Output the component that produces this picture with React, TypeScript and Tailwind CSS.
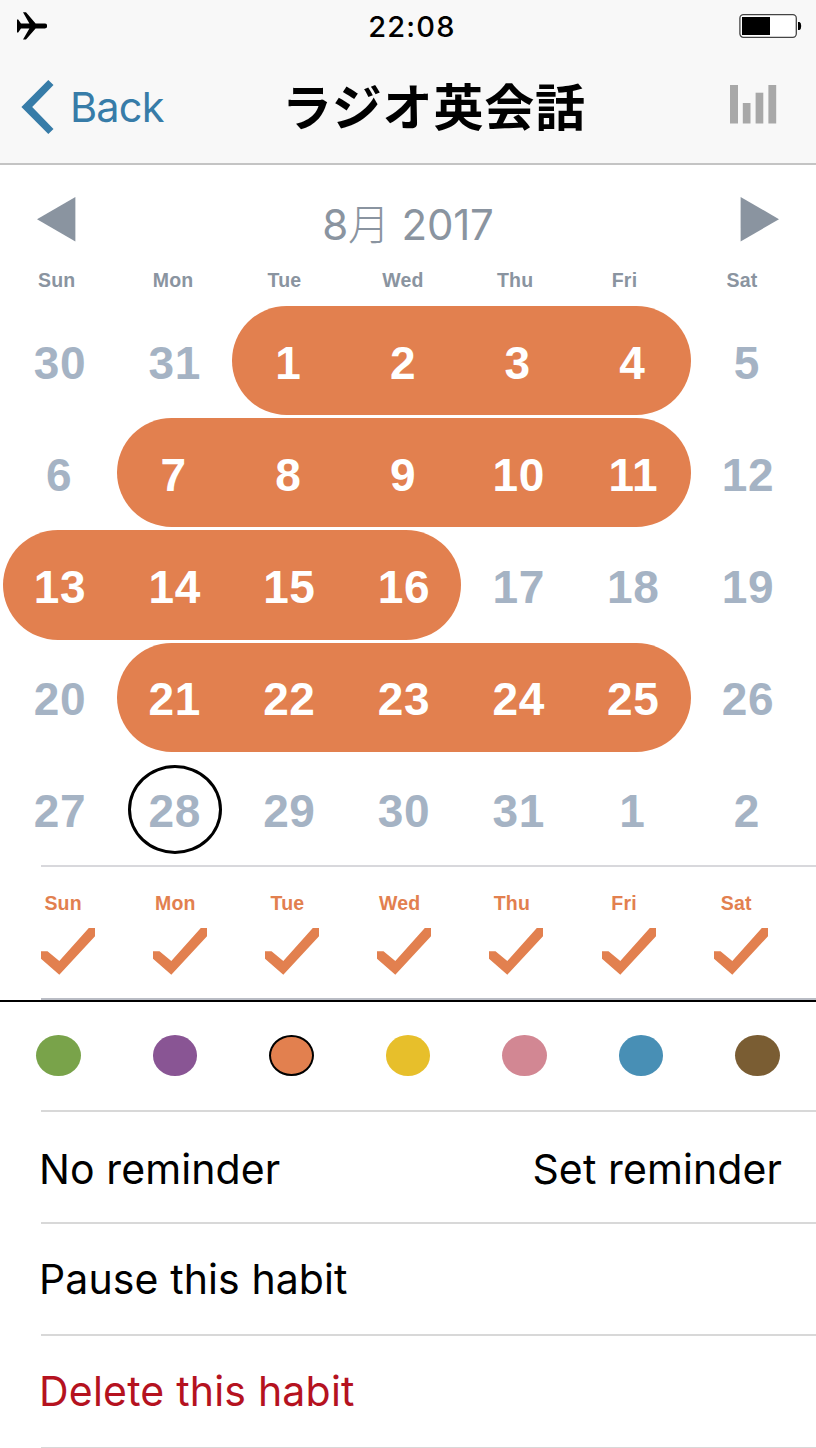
import React, { useState } from 'react'

type Run = {
    done: boolean;
    days: number[];
}

const weekdays = ['Sun', 'Mon', 'Tue', 'Wed', 'Thu', 'Fri', 'Sat']

// every week is split into runs of done / not done days
const weeks: Run[][] = [
    [{ done: false, days: [30, 31] }, { done: true, days: [1, 2, 3, 4] }, { done: false, days: [5] }],
    [{ done: false, days: [6] }, { done: true, days: [7, 8, 9, 10, 11] }, { done: false, days: [12] }],
    [{ done: true, days: [13, 14, 15, 16] }, { done: false, days: [17, 18, 19] }],
    [{ done: false, days: [20] }, { done: true, days: [21, 22, 23, 24, 25] }, { done: false, days: [26] }],
    [{ done: false, days: [27, 28, 29, 30, 31, 1, 2] }],
]

const colors = [
    { name: 'green', bg: 'bg-[#79a34a]' },
    { name: 'purple', bg: 'bg-[#895594]' },
    { name: 'orange', bg: 'bg-[#e2804f]' },
    { name: 'yellow', bg: 'bg-[#e7bf2b]' },
    { name: 'pink', bg: 'bg-[#d28793]' },
    { name: 'blue', bg: 'bg-[#488fb5]' },
    { name: 'brown', bg: 'bg-[#7a5d33]' },
]

const Header = () => (
    <header className="h-[165px] bg-[#f8f8f8] border-b-2 border-[#c4c4c4]">
        <div className="h-[52px] pl-[17px] pr-[14px] grid grid-cols-3 items-center">
            <svg className="w-[30px] h-[28px]" viewBox="0 0 30 28">
                <path d="M0 7.5h1.2l2.8 4h8.4L6 .2h3l9.6 11.3h9.2a2.4 2.4 0 0 1 0 4.9h-9.2L9 27.6H6l6.4-11.2H4l-2.8 4H0z" fill="#000" />
            </svg>
            <span className="justify-self-center pl-[5px] text-[29px] font-medium tracking-[1.2px] leading-none whitespace-nowrap">22:08</span>
            <svg className="justify-self-end w-[63px] h-[24px]" viewBox="0 0 63 24">
                <rect x="0.9" y="0.7" width="56.4" height="22.6" rx="3.5" fill="#fff" stroke="#444" strokeWidth="1.3" />
                <rect x="3" y="3" width="28" height="18" fill="#000" />
                <path d="M59 8h1.5q1.7.6 1.7 4t-1.7 4H59z" fill="#000" />
            </svg>
        </div>
        <div className="h-[110px] pl-[21px] pr-[40px] grid grid-cols-[261px_1fr_191px] items-center">
            <button className="flex items-center gap-[16px] text-[#377ca8]">
                <svg className="w-[33px] h-[54px]" viewBox="0 0 33 54">
                    <path d="M27.3 0l5.2 5L11.2 27l21.3 22-5.2 5L.4 27z" fill="currentColor" />
                </svg>
                <span className="pt-[2px] text-[41.5px] tracking-[-0.8px] leading-none">Back</span>
            </button>
            <h1 className="justify-self-center -mt-[6px] font-['Noto_Sans_CJK_JP',sans-serif] font-bold text-[50px] tracking-[0.8px] leading-none whitespace-nowrap">ラジオ英会話</h1>
            <svg className="justify-self-end -mt-[5px] w-[47px] h-[39px]" viewBox="0 0 47 39" fill="#a8a8a8">
                <rect x="0" y="0" width="8" height="38.5" />
                <rect x="12.8" y="18" width="7.7" height="20.5" />
                <rect x="25.6" y="7.7" width="7.7" height="30.8" />
                <rect x="38.4" y="0" width="7.8" height="38.5" />
            </svg>
        </div>
    </header>
)

const Calendar = () => (
    <section>
        <div className="h-[101px] pt-[8px] px-[37px] flex items-center justify-between text-[#8a94a0]">
            <svg className="w-[39px] h-[45px]" viewBox="0 0 39 45">
                <path d="M38.4 0v44.5L0 22.2z" fill="currentColor" />
            </svg>
            <h2 className="pt-[10px] text-[42px] leading-none tracking-[-0.2px] font-[Inter,'Noto_Sans_CJK_JP',sans-serif]">8<span className="font-light">月</span> 2017</h2>
            <svg className="w-[39px] h-[45px]" viewBox="0 0 39 45">
                <path d="M.6 0v44.5L39 22.2z" fill="currentColor" />
            </svg>
        </div>
        <div className="h-[40px] pl-[38px] pt-[4px] flex font-['Liberation_Sans',sans-serif] font-bold text-[19.5px] leading-[20px] tracking-[0.2px] text-[#8a94a0]">
            {weekdays.map((day) => (
                <span key={day} className="w-[114.75px] shrink-0">{day}</span>
            ))}
        </div>
        <div className="pl-[2.7px] font-['Liberation_Sans',sans-serif] font-bold text-[46px] leading-none tracking-[0.6px]">
            {weeks.map((runs, w) => (
                <div key={w} className="h-[112.2px] flex">
                    {runs.map((run) => (
                        <div
                            key={run.days[0]}
                            className={`h-[109.2px] flex rounded-full ${run.done ? 'bg-[#e2804f] text-white' : 'text-[#a5b3c4]'}`}
                        >
                            {run.days.map((day) => (
                                <div key={day} className={`relative w-[114.67px] pt-[4px] flex items-center justify-center ${day < 10 ? 'pr-[2px]' : ''}`}>
                                    {day}
                                    {day === 28 && (
                                        <span className="absolute left-[10.5px] top-[10px] w-[94px] h-[89px] rounded-[50%] border-[3px] border-black"></span>
                                    )}
                                </div>
                            ))}
                        </div>
                    ))}
                </div>
            ))}
        </div>
    </section>
)

const Schedule = () => (
    <section className="h-[137px] -mt-[2px] border-b-2 border-black">
        <div className="h-[135px] ml-[41px] border-y-2 border-t-[#d8d8dc] border-b-[#b9bcc4]">
            <div className="pt-[26px] -ml-[34px] flex">
                {weekdays.map((day) => (
                    <div key={day} className="w-[112.2px] shrink-0 flex flex-col items-center text-[#e2804f]">
                        <span className="font-['Liberation_Sans',sans-serif] font-bold text-[19.5px] leading-[20px] tracking-[0.2px]">{day}</span>
                        <svg className="w-[55px] h-[47px] mt-[15px] ml-[10px]" viewBox="0 0 55 47">
                            <path d="M0 23.3h6.5L18.3 33 47.8 0H54v8.3L18.3 46.7 0 30.7z" fill="currentColor" />
                        </svg>
                    </div>
                ))}
            </div>
        </div>
    </section>
)

const ColorPicker = () => {
    const [selected, setSelected] = useState('orange')

    return (
        <div className="h-[108px] pb-[1px] flex items-center">
            {colors.map((color) => (
                <div key={color.name} className="w-[116.5px] shrink-0 flex justify-center">
                    <button
                        aria-label={color.name}
                        className={`w-[44.5px] h-[41px] rounded-[50%] ${color.bg} ${selected === color.name ? 'border-2 border-black' : ''}`}
                        onClick={() => setSelected(color.name)}
                    ></button>
                </div>
            ))}
        </div>
    )
}

const App = () => {
    return (
        <div className="w-[816px] h-[1448px] overflow-hidden bg-white text-black font-[Inter,sans-serif]">
            <Header />
            <Calendar />
            <Schedule />
            <ColorPicker />
            <div className="ml-[41px] text-[41px] tracking-[0.1px] leading-none">
                <div className="h-[112.2px] pt-[4px] pr-[34px] border-t-2 border-[#d8d8d8] flex items-center justify-between">
                    <span className="-ml-[2px]">No reminder</span>
                    <span>Set reminder</span>
                </div>
                <div className="h-[112.2px] border-t-2 border-[#d8d8d8] flex items-center">
                    <span className="-ml-[2px]">Pause this habit</span>
                </div>
                <div className="h-[114.2px] border-y-2 border-[#d8d8d8] flex items-center text-[#b5121f]">
                    <span className="-ml-[2px] tracking-[0.2px]">Delete this habit</span>
                </div>
            </div>
        </div>
    );
}

export default App
